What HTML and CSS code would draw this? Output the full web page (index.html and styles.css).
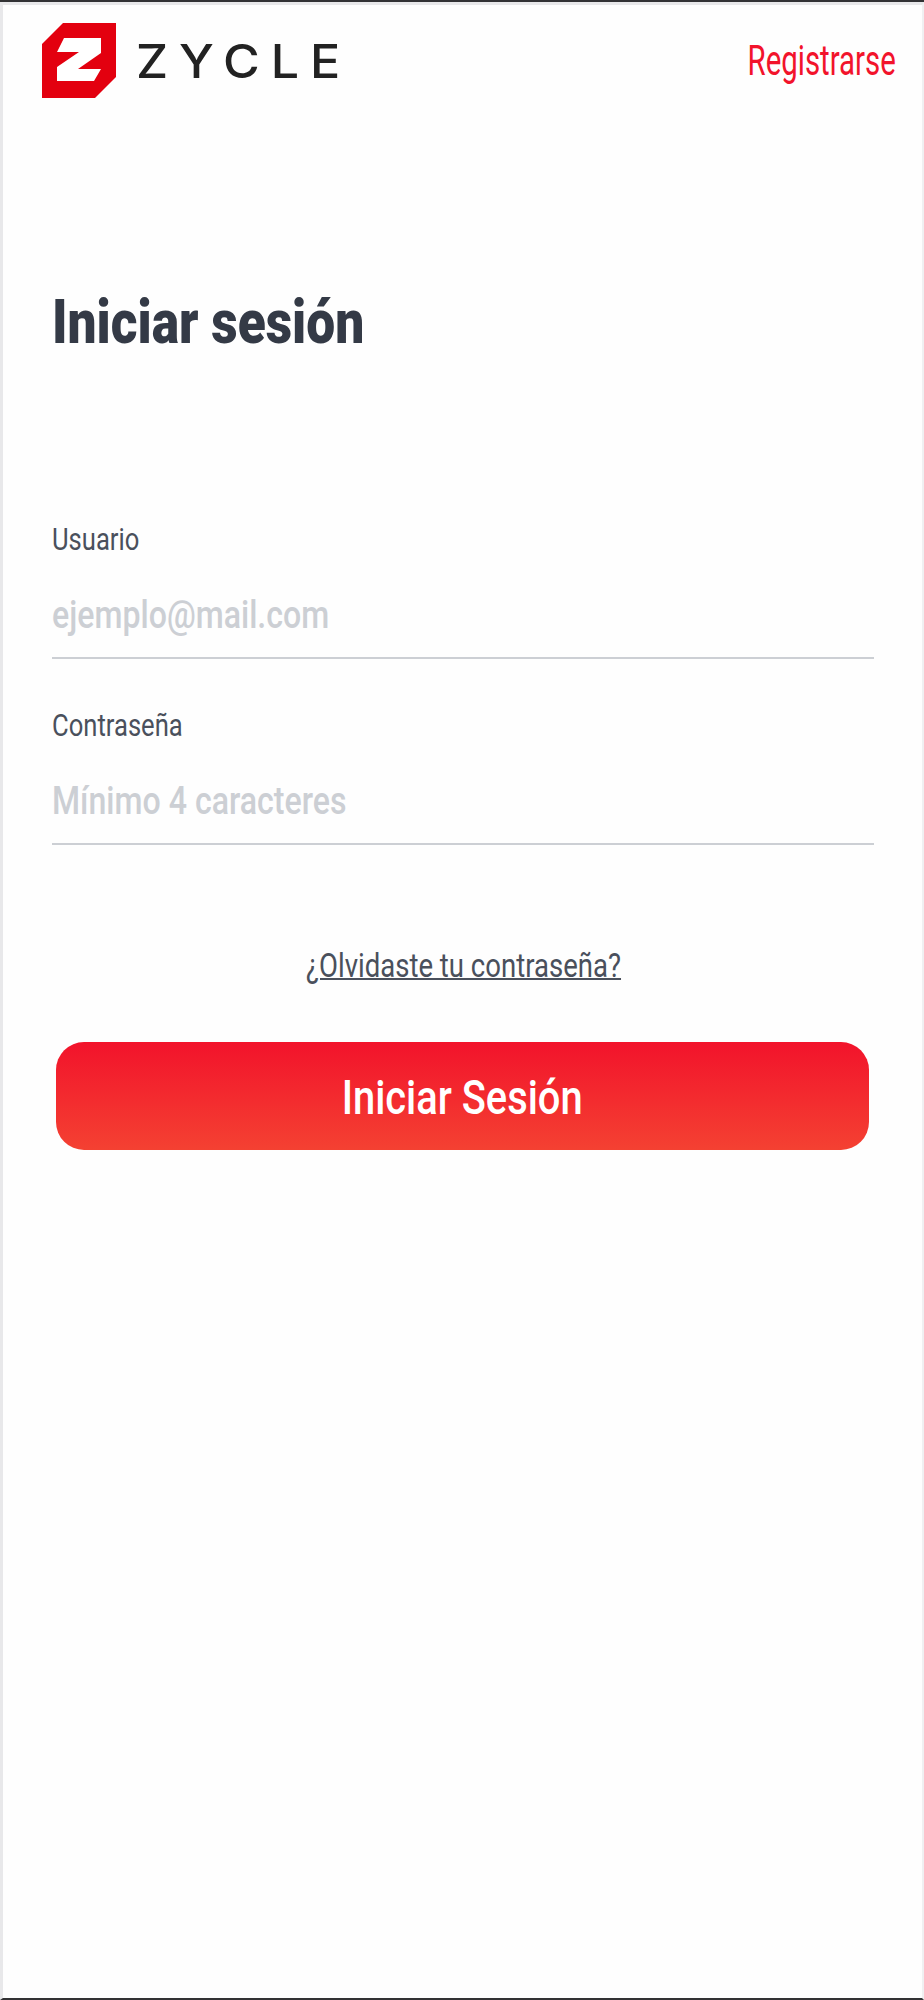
FILE: index.html
```html
<!DOCTYPE html>
<html lang="es">
<head>
    <meta charset="UTF-8">
    <meta name="viewport" content="width=device-width, initial-scale=1.0">
    <title>Zycle</title>
    <link rel="stylesheet" href="styles.css">
</head>

<body>
    <div class="screen">
        <header class="top-bar">
            <div class="logo">
                <svg class="logo-mark" width="74" height="75" viewBox="0 0 74 75">
                    <polygon fill="#e3000f" points="21,0 74,0 74,54 53,75 0,75 0,21"/>
                    <polygon fill="#fff" points="22,15 59,15 59,30 36,46 59,46 52,58 15,58 15,44 37,29 15,29"/>
                </svg>
                <span class="logo-name">ZYCLE</span>
            </div>
            <a class="register-link" href="#"><span class="narrow">Registrarse</span></a>
        </header>

        <h1 class="title"><span class="narrow">Iniciar sesión</span></h1>

        <form class="login-form">
            <div class="field">
                <label class="field-label"><span class="narrow">Usuario</span></label>
                <div class="field-value"><span class="narrow">ejemplo@mail.com</span></div>
            </div>
            <div class="field">
                <label class="field-label"><span class="narrow">Contraseña</span></label>
                <div class="field-value"><span class="narrow">Mínimo 4 caracteres</span></div>
            </div>

            <a class="forgot-link" href="#"><span class="narrow">¿Olvidaste tu contraseña?</span></a>

            <button class="submit-button" type="button"><span class="narrow">Iniciar Sesión</span></button>
        </form>
    </div>
</body>
</html>
```

FILE: styles.css
```css
html, body
{
    margin: 0;
    padding: 0;
}

body
{
    font-family: Roboto, "Liberation Sans", sans-serif;
    background-color: rgb(255, 255, 255);
    border-top: 2px solid rgb(50, 50, 52);
}

.screen
{
    box-sizing: border-box;
    height: 1998px;
    border-top: 3px solid rgb(232, 232, 234);
    border-left: 3px solid rgb(232, 232, 234);
    border-right: 2px solid rgb(240, 240, 242);
    border-bottom: 2px solid rgb(50, 50, 52);
    background-color: rgb(254, 254, 254);
    display: flex;
    flex-direction: column;
}

/* no condensed font installed, so text is squeezed */
.narrow
{
    display: inline-block;
    transform: scaleX(0.8);
    transform-origin: left center;
    white-space: nowrap;
}

.top-bar
{
    display: flex;
    justify-content: space-between;
    padding: 18px 26px 0 39px;
}

.logo
{
    display: flex;
    align-items: flex-start;
}

.logo-mark
{
    display: block;
}

.logo-name
{
    font-family: Inter, sans-serif;
    font-size: 46px;
    font-weight: 500;
    line-height: 50px;
    letter-spacing: 10px;
    margin: 13px 0 0 20px;
    color: rgb(34, 34, 34);
    transform: scaleX(1.09);
    transform-origin: left center;
}

.register-link
{
    margin-top: 15px;
    font-size: 42px;
    line-height: 46px;
    color: rgb(242, 19, 43);
    text-decoration: none;
}

.register-link .narrow
{
    transform: scaleX(0.7);
    transform-origin: right center;
}

.title
{
    margin: 190px 0 0 49px;
    font-size: 62px;
    line-height: 68px;
    font-weight: 900;
    color: rgb(52, 58, 70);
}

.title .narrow
{
    transform: scaleX(0.83);
}

.login-form
{
    display: flex;
    flex-direction: column;
    margin-top: 165px;
    padding: 0 48px 0 49px;
}

.field
{
    height: 186px;
}

.field-label
{
    display: block;
    font-size: 32px;
    line-height: 36px;
    color: rgb(74, 80, 92);
}

.field-value
{
    margin-top: 34px;
    padding-bottom: 18px;
    font-size: 38px;
    font-weight: 500;
    line-height: 48px;
    color: rgb(204, 207, 212);
    border-bottom: 2px solid rgb(204, 207, 212);
}

.field-value .narrow
{
    transform: scaleX(0.845);
}

.forgot-link
{
    align-self: center;
    margin-top: 51px;
    font-size: 34px;
    line-height: 42px;
    color: rgb(74, 80, 92);
    text-decoration: none;
}

.forgot-link .narrow
{
    transform: scaleX(0.81);
    transform-origin: center;
    text-decoration: underline;
    text-decoration-thickness: 2px;
}

.submit-button
{
    margin: 56px 5px 0 4px;
    height: 108px;
    padding-top: 3px;
    border: none;
    border-radius: 28px;
    background: linear-gradient(to bottom, rgb(242, 19, 43), rgb(244, 65, 50));
    color: rgb(255, 255, 255);
    font-family: inherit;
    font-size: 48px;
    font-weight: 500;
}

.submit-button .narrow
{
    transform: scaleX(0.83);
    transform-origin: center;
}
```
